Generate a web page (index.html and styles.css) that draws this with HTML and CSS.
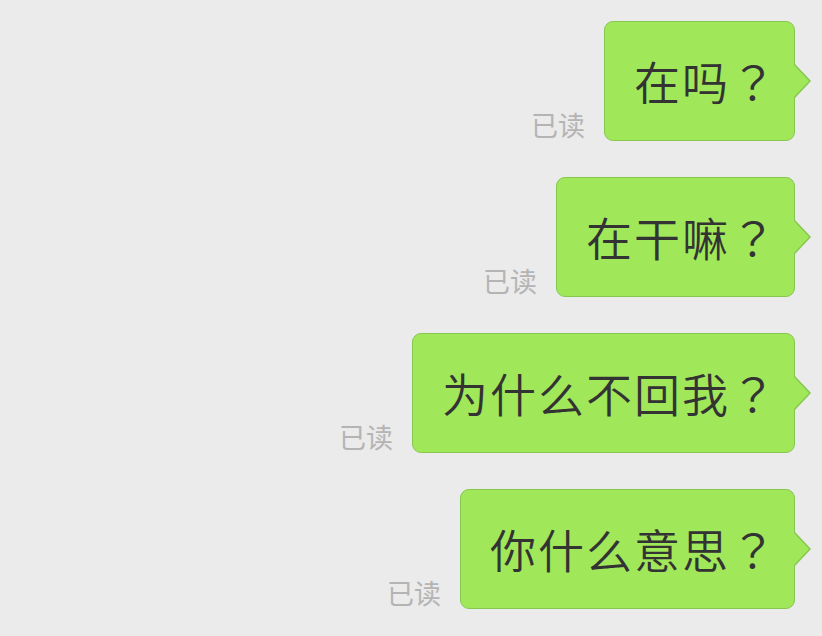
FILE: index.html
```html
<!DOCTYPE html>
<html lang="zh-CN">
<head>
<meta charset="utf-8">
<title>聊天</title>
<link rel="stylesheet" href="styles.css">
</head>
<body>
  <main class="chat">
    <div class="row">
      <span class="status">已读</span>
      <div class="bubble">在吗<span class="qmark" lang="ja">？</span></div>
    </div>
    <div class="row">
      <span class="status">已读</span>
      <div class="bubble">在干嘛<span class="qmark" lang="ja">？</span></div>
    </div>
    <div class="row">
      <span class="status">已读</span>
      <div class="bubble">为什么不回我<span class="qmark" lang="ja">？</span></div>
    </div>
    <div class="row">
      <span class="status">已读</span>
      <div class="bubble">你什么意思<span class="qmark" lang="ja">？</span></div>
    </div>
  </main>
</body>
</html>
```
FILE: styles.css
```css
html, body {
  margin: 0;
  padding: 0;
  background: #ebebeb;
}

body {
  font-family: "Noto Sans CJK SC", "Noto Sans", sans-serif;
  width: 822px;
  height: 636px;
  overflow: hidden;
}

.chat {
  display: flex;
  flex-direction: column;
  align-items: flex-end;
  gap: 36px;
  padding: 21px 27px 0 0;
}

.row {
  display: flex;
  align-items: flex-end;
  gap: 19px;
}

.status {
  font-size: 27px;
  line-height: 30px;
  color: #b4b4b4;
  margin-bottom: 1px;
}

.bubble {
  position: relative;
  box-sizing: border-box;
  height: 120px;
  padding: 0 16px 0 29px;
  background: #a0e75a;
  border: 1px solid #86c74f;
  border-radius: 9px;
  font-size: 46px;
  font-weight: 350;
  letter-spacing: 2px;
  line-height: 116px;
  color: #333333;
}

/* full-width question mark centred in its box */
.qmark {
  font-family: "Noto Sans CJK JP", "Noto Sans CJK SC", sans-serif;
}

/* the tail on the right side of the bubble: outline, then fill */
.bubble::before,
.bubble::after {
  content: "";
  position: absolute;
  top: 50%;
  width: 0;
  height: 0;
  border-style: solid;
}

.bubble::before {
  right: -17px;
  margin-top: -17px;
  border-width: 17px 0 17px 16px;
  border-color: transparent transparent transparent #86c74f;
}

.bubble::after {
  right: -15px;
  margin-top: -16px;
  border-width: 16px 0 16px 15px;
  border-color: transparent transparent transparent #a0e75a;
}
```
